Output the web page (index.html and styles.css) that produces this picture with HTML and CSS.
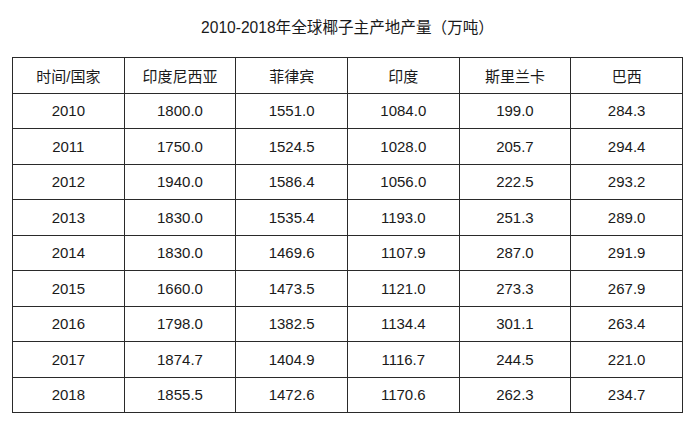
FILE: index.html
```html
<!DOCTYPE html>
<html lang="zh-CN">
<head>
<meta charset="utf-8">
<title>2010-2018年全球椰子主产地产量</title>
<link rel="stylesheet" href="styles.css">
</head>
<body>
<div class="page">
  <h1 class="title">2010-2018年全球椰子主产地产量（万吨）</h1>
  <table class="data">
    <thead>
      <tr><th>时间/国家</th><th>印度尼西亚</th><th>菲律宾</th><th>印度</th><th>斯里兰卡</th><th>巴西</th></tr>
    </thead>
    <tbody>
      <tr><td>2010</td><td>1800.0</td><td>1551.0</td><td>1084.0</td><td>199.0</td><td>284.3</td></tr>
      <tr><td>2011</td><td>1750.0</td><td>1524.5</td><td>1028.0</td><td>205.7</td><td>294.4</td></tr>
      <tr><td>2012</td><td>1940.0</td><td>1586.4</td><td>1056.0</td><td>222.5</td><td>293.2</td></tr>
      <tr><td>2013</td><td>1830.0</td><td>1535.4</td><td>1193.0</td><td>251.3</td><td>289.0</td></tr>
      <tr><td>2014</td><td>1830.0</td><td>1469.6</td><td>1107.9</td><td>287.0</td><td>291.9</td></tr>
      <tr><td>2015</td><td>1660.0</td><td>1473.5</td><td>1121.0</td><td>273.3</td><td>267.9</td></tr>
      <tr><td>2016</td><td>1798.0</td><td>1382.5</td><td>1134.4</td><td>301.1</td><td>263.4</td></tr>
      <tr><td>2017</td><td>1874.7</td><td>1404.9</td><td>1116.7</td><td>244.5</td><td>221.0</td></tr>
      <tr><td>2018</td><td>1855.5</td><td>1472.6</td><td>1170.6</td><td>262.3</td><td>234.7</td></tr>
    </tbody>
  </table>
</div>
</body>
</html>
```

FILE: styles.css
```css
html, body {
  margin: 0;
  padding: 0;
  background: #ffffff;
}
body {
  font-family: "Liberation Sans", "Noto Sans CJK SC", sans-serif;
  color: #1a1a1a;
}
.page {
  width: 700px;
  height: 429px;
  padding: 17px 0 0 12px;
  box-sizing: border-box;
}
.title {
  margin: 0;
  width: 671px;
  height: 40px;
  padding-top: 1px;
  box-sizing: border-box;
  font-size: 15.6px;
  font-weight: normal;
  line-height: 20px;
  text-align: center;
  color: #1a1a1a;
}
.data {
  width: 671px;
  border-collapse: collapse;
  table-layout: fixed;
  font-size: 15px;
}
.data th,
.data td {
  border: 1px solid #2a2a2a;
  height: 34.5px;
  padding: 0;
  text-align: center;
  vertical-align: middle;
  font-weight: normal;
  color: #1a1a1a;
}
```
